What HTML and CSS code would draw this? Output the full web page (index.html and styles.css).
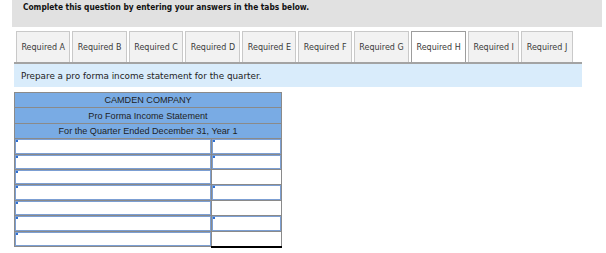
FILE: index.html
```html
<!DOCTYPE html>
<html lang="en">
<head>
    <meta charset="UTF-8">
    <meta name="viewport" content="width=device-width, initial-scale=1.0">
    <title>Required H</title>
    <link rel="stylesheet" href="styles.css">
</head>
<body>
    <div class="question-bar">
        <p>Complete this question by entering your answers in the tabs below.</p>
    </div>

    <div class="tabs">
        <div class="tab">Required A</div>
        <div class="tab">Required B</div>
        <div class="tab">Required C</div>
        <div class="tab">Required D</div>
        <div class="tab">Required E</div>
        <div class="tab">Required F</div>
        <div class="tab">Required G</div>
        <div class="tab active">Required H</div>
        <div class="tab">Required I</div>
        <div class="tab">Required J</div>
    </div>

    <div class="instructions">Prepare a pro forma income statement for the quarter.</div>

    <table class="statement">
        <tr class="head"><th colspan="2">CAMDEN COMPANY</th></tr>
        <tr class="head"><th colspan="2">Pro Forma Income Statement</th></tr>
        <tr class="head"><th colspan="2">For the Quarter Ended December 31, Year 1</th></tr>
        <tr>
            <td class="label"><span class="field"></span></td>
            <td class="amount"><span class="field"></span></td>
        </tr>
        <tr>
            <td class="label"><span class="field"></span></td>
            <td class="amount"><span class="field"></span></td>
        </tr>
        <tr>
            <td class="label"><span class="field"></span></td>
            <td class="amount total"></td>
        </tr>
        <tr>
            <td class="label"><span class="field"></span></td>
            <td class="amount"><span class="field"></span></td>
        </tr>
        <tr>
            <td class="label"><span class="field"></span></td>
            <td class="amount total"></td>
        </tr>
        <tr>
            <td class="label"><span class="field"></span></td>
            <td class="amount"><span class="field"></span></td>
        </tr>
        <tr>
            <td class="label"><span class="field"></span></td>
            <td class="amount total final"></td>
        </tr>
    </table>
</body>
</html>
```

FILE: styles.css
```css
body {
    margin: 0;
    background-color: white;
    font-family: "DejaVu Sans", Verdana, sans-serif;
    color: #222;
}
.question-bar {
    margin-left: 12px;
    width: 590px;
    height: 27px;
    background-color: #e1e1e1;
}
.question-bar p {
    margin: 0;
    padding: 2px 0 0 11px;
    font-family: "DejaVu Sans Condensed", "DejaVu Sans", sans-serif;
    font-size: 8.3px;
    font-weight: bold;
    color: #111;
}
.tabs {
    display: flex;
    gap: 2px;
    margin-left: 14px;
    width: 566px;
    padding: 4px 0 0 2px;
    border-bottom: 2px solid #a3a3a3;
}
.tab {
    flex-shrink: 0;
    box-sizing: border-box;
    height: 31px;
    padding: 0 4.4px;
    display: flex;
    align-items: center;
    white-space: nowrap;
    font-size: 8px;
    color: #3a3a3a;
    background-color: #f2f2f2;
    border: 1px solid #c9c9c9;
    border-bottom: none;
}
.tab.active {
    background-color: white;
    border-color: #9d9d9d;
}
.instructions {
    margin-left: 14px;
    width: 568px;
    height: 23px;
    box-sizing: border-box;
    padding-left: 7px;
    display: flex;
    align-items: center;
    background-color: #d9ecfb;
    font-size: 8.8px;
    color: #222;
}
.statement {
    margin: 5px 0 0 14px;
    border-collapse: collapse;
    font-family: "Liberation Sans", Arial, sans-serif;
}
.statement th,
.statement td {
    padding: 0;
    height: 14.4px;
    border: 1px solid #8a8a8a;
}
.statement th {
    background-color: #79abe4;
    font-size: 9.1px;
    font-weight: normal;
    color: #1e1e1e;
    text-align: center;
}
.statement .label {
    width: 196px;
}
.statement .amount {
    width: 69px;
}
.statement td.total {
    border-top: 1px solid black;
}
.statement td.final {
    border-bottom: 2px solid black;
}
.field {
    position: relative;
    display: block;
    box-sizing: border-box;
    height: 14.4px;
    border: 1px solid #7c9fd3;
    background-color: white;
}
.field::before {
    content: "";
    position: absolute;
    top: 0;
    left: 0;
    width: 2px;
    height: 2px;
    background-color: #2f6fd0;
}
```
